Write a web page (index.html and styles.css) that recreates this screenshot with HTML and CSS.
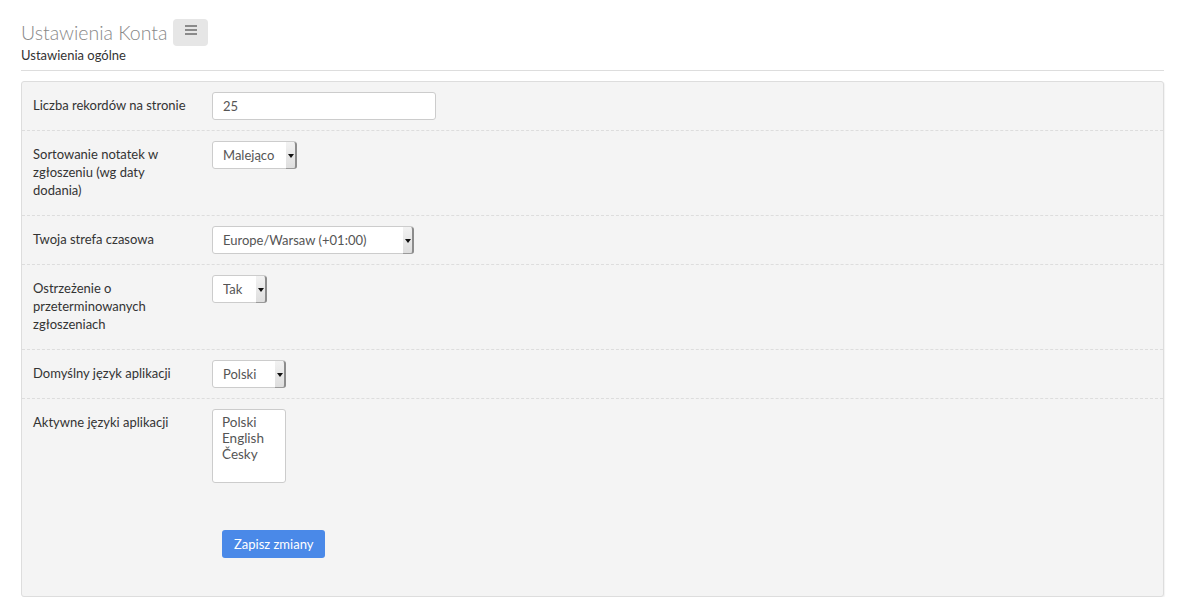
FILE: index.html
```html
<!DOCTYPE html>
<html lang="pl">
<head>
  <meta charset="UTF-8" />
  <meta name="viewport" content="width=device-width, initial-scale=1.0" />
  <title>Ustawienia Konta</title>
  <link rel="stylesheet" href="styles.css">
</head>
<body>
  <div class="page">
    <div class="page-header">
      <h1>Ustawienia Konta</h1>
      <button class="menu-btn" type="button" aria-label="Menu">
        <svg width="12" height="10" viewBox="0 0 12 10">
          <rect x="0" y="0" width="12" height="2" fill="#8a8a8a" />
          <rect x="0" y="4" width="12" height="2" fill="#8a8a8a" />
          <rect x="0" y="8" width="12" height="2" fill="#8a8a8a" />
        </svg>
      </button>
    </div>
    <div class="subtitle">Ustawienia ogólne</div>
    <hr class="divider" />

    <form class="panel" id="settingsForm">
      <div class="row">
        <label class="row-label" for="perPage">Liczba rekordów na stronie</label>
        <div class="row-field">
          <input type="text" id="perPage" class="text-input" value="25" />
        </div>
      </div>

      <div class="row">
        <label class="row-label" for="noteOrder">Sortowanie notatek w zgłoszeniu (wg daty dodania)</label>
        <div class="row-field">
          <span class="select-wrap select-order">
            <select id="noteOrder">
              <option>Malejąco</option>
              <option>Rosnąco</option>
            </select>
            <span class="caret"></span>
          </span>
        </div>
      </div>

      <div class="row">
        <label class="row-label" for="timezone">Twoja strefa czasowa</label>
        <div class="row-field">
          <span class="select-wrap select-tz">
            <select id="timezone">
              <option>Europe/Warsaw (+01:00)</option>
              <option>Europe/London (+00:00)</option>
              <option>America/New_York (-05:00)</option>
            </select>
            <span class="caret"></span>
          </span>
        </div>
      </div>

      <div class="row">
        <label class="row-label" for="overdue">Ostrzeżenie o przeterminowanych zgłoszeniach</label>
        <div class="row-field">
          <span class="select-wrap select-yesno">
            <select id="overdue">
              <option>Tak</option>
              <option>Nie</option>
            </select>
            <span class="caret"></span>
          </span>
        </div>
      </div>

      <div class="row">
        <label class="row-label" for="defaultLang">Domyślny język aplikacji</label>
        <div class="row-field">
          <span class="select-wrap select-lang">
            <select id="defaultLang">
              <option>Polski</option>
              <option>English</option>
              <option>Česky</option>
            </select>
            <span class="caret"></span>
          </span>
        </div>
      </div>

      <div class="row row-last">
        <label class="row-label" for="activeLangs">Aktywne języki aplikacji</label>
        <div class="row-field">
          <div class="listbox" id="activeLangs">
            <div>Polski</div>
            <div>English</div>
            <div>Česky</div>
          </div>
        </div>
      </div>

      <div class="actions">
        <button type="submit" class="btn-primary">Zapisz zmiany</button>
      </div>
    </form>
  </div>
</body>
</html>
```

FILE: styles.css
```css
body {
  margin: 0;
  font-family: Lato, "Open Sans", sans-serif;
  font-size: 13px;
  color: #333;
  background: #fff;
}
.page {
  padding: 19px 20px 0 21px;
}
.page-header {
  display: flex;
  align-items: center;
  gap: 6px;
  height: 27px;
}
.page-header h1 {
  margin: 0;
  font-size: 19.5px;
  font-weight: 300;
  color: #888;
}
.menu-btn {
  width: 35px;
  height: 27px;
  padding: 0 0 5px;
  border: none;
  border-radius: 4px;
  background: #e6e6e6;
  display: flex;
  align-items: center;
  justify-content: center;
}
.subtitle {
  line-height: 18px;
  color: #333;
}
.divider {
  margin: 6px 0 0;
  border: none;
  border-top: 1px solid #ddd;
}
.panel {
  margin-top: 10px;
  background: #f4f4f4;
  border: 1px solid #ddd;
  border-radius: 3px;
  box-shadow: 1px 1px 1px rgba(0,0,0,0.05);
}
.row {
  display: flex;
  padding: 10px 11px;
  border-bottom: 1px dashed #ddd;
}
.row-last {
  border-bottom: none;
}
.row-label {
  width: 156px;
  flex-shrink: 0;
  padding: 4px 12px 6px 0;
  line-height: 18px;
  color: #333;
}
.row-field {
  margin-left: 11px;
}
.text-input {
  box-sizing: border-box;
  width: 224px;
  height: 28px;
  padding: 0 10px;
  border: 1px solid #ccc;
  border-radius: 3px;
  background: #fff;
  font: 13px Lato, sans-serif;
  color: #555;
}
.select-wrap {
  position: relative;
  display: inline-block;
  height: 28px;
}
.select-wrap select {
  box-sizing: border-box;
  width: 100%;
  height: 28px;
  padding: 0 12px 0 10px;
  border: 1px solid #ccc;
  border-radius: 3px;
  background: #fff;
  font: 13px Lato, sans-serif;
  color: #555;
  -webkit-appearance: none;
  appearance: none;
}
.select-order { width: 85px; }
.select-tz { width: 202px; }
.select-yesno { width: 55px; }
.select-lang { width: 74px; }
.caret {
  position: absolute;
  top: 1px;
  right: 0;
  bottom: 0;
  width: 9px;
  background: linear-gradient(#f2f2f2, #dedede);
  border-right: 2px solid #8c8c8c;
  border-bottom: 1px solid #9a9a9a;
  border-radius: 0 3px 3px 0;
  pointer-events: none;
}
.caret::after {
  content: "";
  position: absolute;
  left: 2px;
  top: 12px;
  border-top: 4px solid #111;
  border-left: 3px solid transparent;
  border-right: 3px solid transparent;
}
.listbox {
  box-sizing: border-box;
  width: 74px;
  height: 74px;
  padding: 4px 9px;
  border: 1px solid #ccc;
  border-radius: 3px;
  background: #fff;
  font-size: 13.5px;
  line-height: 16px;
  color: #555;
}
.actions {
  padding: 37px 0 38px 200px;
}
.btn-primary {
  height: 28px;
  padding: 0 12px;
  border: none;
  border-radius: 3px;
  background: #4a89e8;
  color: #fff;
  font: 13px Lato, sans-serif;
  cursor: pointer;
}
```
